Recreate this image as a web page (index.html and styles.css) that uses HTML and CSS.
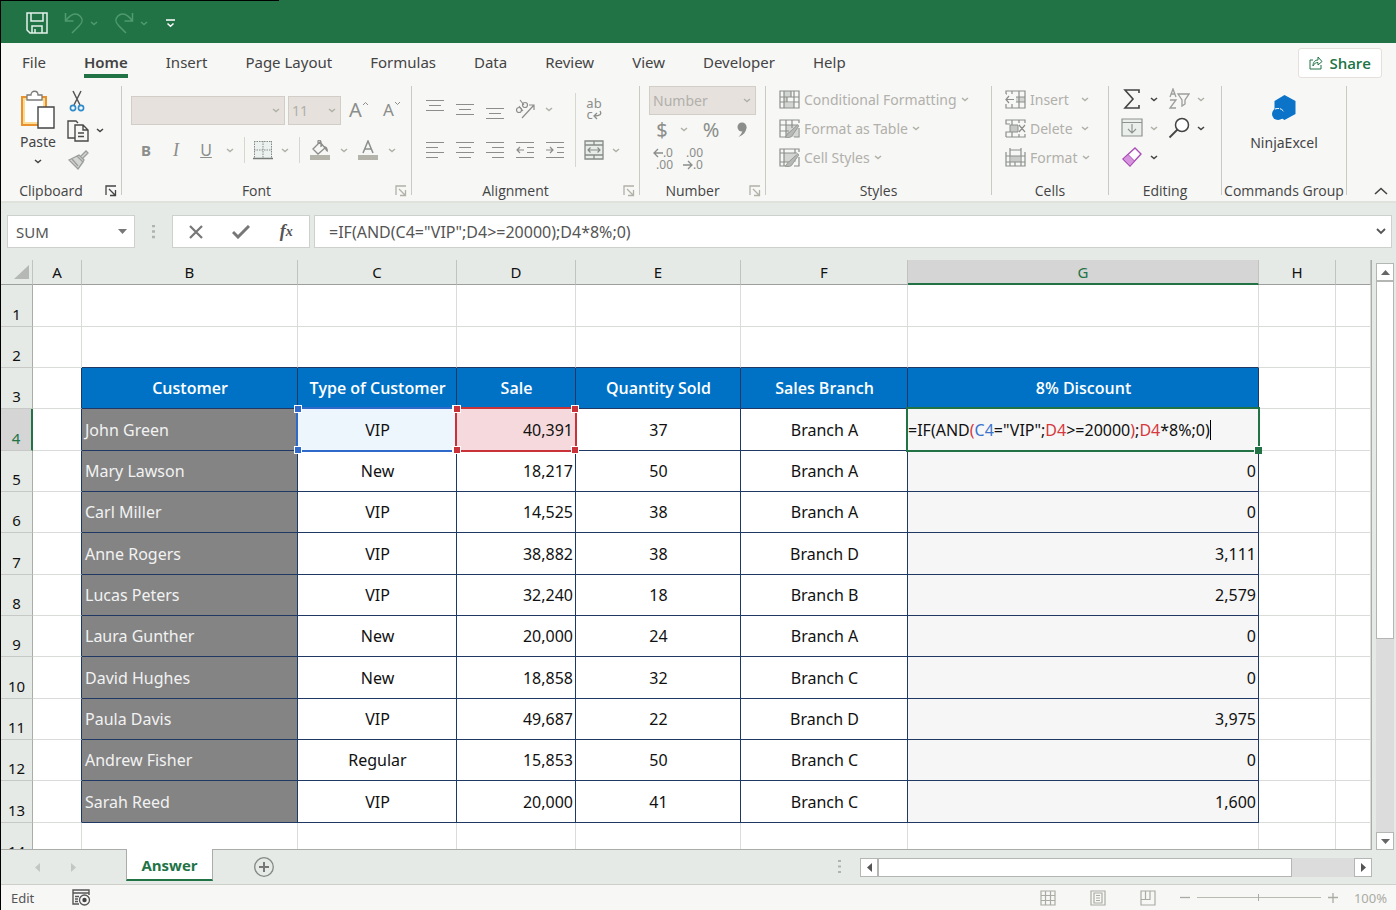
FILE: index.html
```
<!DOCTYPE html>
<html lang="en">
<head>
  <meta charset="UTF-8">
  <meta name="viewport" content="width=device-width, initial-scale=1.0">
  <title>Spreadsheet</title>
  <link rel="stylesheet" href="styles.css">
</head>
<body>
  <svg class="defs" aria-hidden="true">
    <symbol id="chev" viewBox="0 0 8 5"><path d="M1 1l3 2.600L7 1" fill="none" stroke="currentColor" stroke-width="1.500"/></symbol>
    <symbol id="launch" viewBox="0 0 12 12"><path d="M1 10V1h10M4 4l6 6M10.500 5v5.500H5" fill="none" stroke="currentColor" stroke-width="1.300"/></symbol>
    <symbol id="brush" viewBox="0 0 20 20"><path d="M10 17c-3 2-6 1-8 .5 3-1 2-5 5-5.500L18 2l1 2-7 10z" fill="#b5b8b4" stroke="#8b8f8a"/></symbol>
  </svg>

  <div class="app">
    <header class="titlebar">
      <button class="save" aria-label="Save"><svg width="22" height="22" viewBox="0 0 22 22"><path d="M1 1h20v20H4l-3-3zM5 1v8h12V1M6 21v-7h10v7M9 21v-4" fill="none" stroke="#e4f1e9" stroke-width="1.500"/></svg></button>
      <button class="undo" aria-label="Undo"><svg width="20" height="22" viewBox="0 0 20 22"><path d="M1.500 1v8h8M2 8.500C7 2 12 0 16 4s2 7-1 10l-7 7" fill="none" stroke="currentColor" stroke-width="1.500"/></svg><svg class="chev"><use href="#chev"/></svg></button>
      <button class="undo" aria-label="Redo"><svg width="20" height="22" viewBox="0 0 20 22"><path d="M18.500 1v8h-8M18 8.500C13 2 8 0 4 4s-2 7 1 10l7 7" fill="none" stroke="currentColor" stroke-width="1.500"/></svg><svg class="chev"><use href="#chev"/></svg></button>
      <button class="more" aria-label="Customize toolbar"><svg width="9" height="9" viewBox="0 0 9 9"><path d="M0 1h9M1.500 4.500l3 2.800 3-2.800" fill="none" stroke="#fff" stroke-width="1.500"/></svg></button>
    </header>

    <nav class="tabs">
      <a href="#">File</a>
      <a href="#" class="active">Home</a>
      <a href="#">Insert</a>
      <a href="#">Page Layout</a>
      <a href="#">Formulas</a>
      <a href="#">Data</a>
      <a href="#">Review</a>
      <a href="#">View</a>
      <a href="#">Developer</a>
      <a href="#">Help</a>
      <button class="share"><svg width="14" height="14" viewBox="0 0 14 14"><path d="M4 4H1v9h11V9M4 10c0-4 2-6 5-6V1l4 4.500L9 9V6.500C7 6.500 5 7.500 4 10z" fill="none" stroke="currentColor"/></svg>Share</button>
    </nav>

    <section class="ribbon">
      <div class="group clipboard">
        <div class="tools">
          <button class="paste"><svg width="36" height="40" viewBox="0 0 36 40"><path d="M2 7h24v28H2z" fill="#fff" stroke="#e8912d" stroke-width="2"/><path d="M4 9h20v24H4z" fill="none" stroke="#fbdc94" stroke-width="2"/><path d="M7 10V5h4c0-5 7-5 7 0h4v5z" fill="#fff" stroke="#7b7b78" stroke-width="1.300"/><path d="M18 17h16v21H18z" fill="#fff" stroke="#444" stroke-width="1.400"/></svg>Paste<svg class="chev"><use href="#chev"/></svg></button>
          <div class="stack">
            <button aria-label="Cut"><svg width="22" height="22" viewBox="0 0 22 22"><path d="M6 1l7 14M14 1L7 15" fill="none" stroke="#555" stroke-width="1.500"/><circle cx="6" cy="18" r="2.600" fill="none" stroke="#2e8ccb" stroke-width="1.600"/><circle cx="14" cy="18" r="2.600" fill="none" stroke="#2e8ccb" stroke-width="1.600"/></svg></button>
            <button aria-label="Copy"><svg width="22" height="22" viewBox="0 0 22 22"><path d="M8 18H1V1h8l2 2M8 5h8l5 5v11H8zM16 5v5h5M11 13h6M11 16.500h6" fill="none" stroke="#4a4a48" stroke-width="1.400"/></svg><svg class="chev"><use href="#chev"/></svg></button>
            <button aria-label="Format Painter"><svg width="22" height="22" viewBox="0 0 22 22"><path d="M2 11l8-4 6 6-5 7zM5 10l6 7M10 7l2-1 5 5-1 2M14 7l5-5 2 2-5 5" fill="#d4d5d2" stroke="#9b9e9a" stroke-width="1.300"/></svg></button>
          </div>
        </div>
        <footer><span>Clipboard</span><button aria-label="Clipboard settings"><svg class="launch"><use href="#launch"/></svg></button></footer>
      </div>

      <div class="group font off">
        <div class="tools rows">
          <div class="row top">
            <span class="pick name"><select aria-label="Font"><option></option></select><svg class="chev"><use href="#chev"/></svg></span>
            <span class="pick size"><select aria-label="Font size"><option>11</option></select><svg class="chev"><use href="#chev"/></svg></span>
            <button class="ib big" aria-label="Increase font size">A<svg width="7" height="16" viewBox="0 0 7 16"><path d="M1 4l2.500-2.500L6 4" fill="none" stroke="currentColor"/></svg></button>
            <button class="ib mid" aria-label="Decrease font size">A<svg width="7" height="16" viewBox="0 0 7 16"><path d="M1 1l2.500 2.500L6 1" fill="none" stroke="currentColor"/></svg></button>
          </div>
          <div class="row">
            <button class="ib bold">B</button>
            <button class="ib ital">I</button>
            <button class="ib under">U</button>
            <button class="dd" aria-label="Underline styles"><svg class="chev"><use href="#chev"/></svg></button>
            <i class="sep"></i>
            <button class="ib narrow" aria-label="Borders"><svg width="20" height="20" viewBox="0 0 20 20"><path d="M1 1h18v17H1z" fill="#eaf1ee"/><path d="M1.500 1v17M10 1v17M18.500 1v17M1 1.500h18M1 10h18" stroke="#858a86" stroke-dasharray="1.500 1" fill="none"/><path d="M0 18.500h20" stroke="#777b77" stroke-width="1.500"/></svg></button>
            <button class="dd" aria-label="Border styles"><svg class="chev"><use href="#chev"/></svg></button>
            <i class="sep"></i>
            <button class="ib" aria-label="Fill color"><svg width="20" height="20" viewBox="0 0 20 20"><path d="M3 9l7-7 5 6-7 6zM8 4V1q2-2 3 1v5" fill="none" stroke="#8b8e8a" stroke-width="1.300"/><path d="M14 6q4 0 4 6-2 0-3-3z" fill="#8b8e8a"/><path d="M0 15h20v5H0z" fill="#b5b4ab"/></svg></button>
            <button class="dd" aria-label="Fill colors"><svg class="chev"><use href="#chev"/></svg></button>
            <button class="ib" aria-label="Font color"><svg width="20" height="20" viewBox="0 0 20 20"><path d="M5 13l5-12 5 12M7 9h6" fill="none" stroke="#8b8e8a" stroke-width="1.500"/><path d="M0 15h20v5H0z" fill="#b5b4ab"/></svg></button>
            <button class="dd" aria-label="Font colors"><svg class="chev"><use href="#chev"/></svg></button>
          </div>
        </div>
        <footer><span>Font</span><button aria-label="Font settings"><svg class="launch"><use href="#launch"/></svg></button></footer>
      </div>

      <div class="group align off">
        <div class="tools">
          <div class="rows">
            <div class="row top">
              <button class="ib" aria-label="Top align"><svg width="18" height="22" viewBox="0 0 18 22"><path d="M0 2.500h18M3 7.500h12M0 12.500h18" stroke="currentColor" stroke-width="1.200"/></svg></button>
              <button class="ib" aria-label="Middle align"><svg width="18" height="22" viewBox="0 0 18 22"><path d="M0 6.500h18M3 11.500h12M0 16.500h18" stroke="currentColor" stroke-width="1.200"/></svg></button>
              <button class="ib" aria-label="Bottom align"><svg width="18" height="22" viewBox="0 0 18 22"><path d="M0 10.500h18M3 15.500h12M0 20.500h18" stroke="currentColor" stroke-width="1.200"/></svg></button>
              <button class="ib" aria-label="Orientation"><svg width="20" height="20" viewBox="0 0 20 20"><g fill="none" stroke="currentColor" stroke-width="1.200"><path d="M7 19L19 6M19 11V6h-5"/><circle cx="4" cy="11" r="2.500"/><path d="M4 7l4 5"/><circle cx="10" cy="6" r="2.500"/><path d="M5 1l4 5"/></g></svg></button>
              <button class="dd" aria-label="Orientation options"><svg class="chev"><use href="#chev"/></svg></button>
            </div>
            <div class="row">
              <button class="ib" aria-label="Align left"><svg width="18" height="18" viewBox="0 0 18 18"><path d="M0 1.500h18M0 6.500h12M0 11.500h18M0 16.500h12" stroke="currentColor" stroke-width="1.200"/></svg></button>
              <button class="ib" aria-label="Center"><svg width="18" height="18" viewBox="0 0 18 18"><path d="M0 1.500h18M3 6.500h12M0 11.500h18M3 16.500h12" stroke="currentColor" stroke-width="1.200"/></svg></button>
              <button class="ib" aria-label="Align right"><svg width="18" height="18" viewBox="0 0 18 18"><path d="M0 1.500h18M6 6.500h12M0 11.500h18M6 16.500h12" stroke="currentColor" stroke-width="1.200"/></svg></button>
              <button class="ib" aria-label="Decrease indent"><svg width="18" height="18" viewBox="0 0 18 18"><path d="M0 1.500h18M11 6.500h7M11 11.500h7M0 16.500h18M8 9H1M4 6L1 9l3 3" fill="none" stroke="currentColor" stroke-width="1.200"/></svg></button>
              <button class="ib" aria-label="Increase indent"><svg width="18" height="18" viewBox="0 0 18 18"><path d="M0 1.500h18M11 6.500h7M11 11.500h7M0 16.500h18M0 9h7M4 6l3 3-3 3" fill="none" stroke="currentColor" stroke-width="1.200"/></svg></button>
            </div>
          </div>
          <i class="sep tall"></i>
          <div class="rows">
            <div class="row top">
              <button class="ib narrow wrap" aria-label="Wrap text"><span>ab</span><span>c<svg width="9" height="11" viewBox="0 0 9 11"><path d="M7 2q3 5-6 5M4 4L1 7l3 3" fill="none" stroke="currentColor" stroke-width="1.300"/></svg></span></button>
            </div>
            <div class="row">
              <button class="ib narrow" aria-label="Merge cells"><svg width="20" height="20" viewBox="0 0 20 20"><path d="M1 1h18v18H1zM1 5h18M1 15h18M10 1v4M10 15v4" fill="#e8ece9" stroke="#858a86" stroke-width="1.300"/><path d="M4 10h12M6.500 7.500L4 10l2.500 2.500M13.500 7.500L16 10l-2.500 2.500" fill="none" stroke="#858a86" stroke-width="1.200"/></svg></button>
              <button class="dd" aria-label="Merge options"><svg class="chev"><use href="#chev"/></svg></button>
            </div>
          </div>
        </div>
        <footer><span>Alignment</span><button aria-label="Alignment settings"><svg class="launch"><use href="#launch"/></svg></button></footer>
      </div>

      <div class="group number off">
        <div class="tools rows">
          <span class="pick"><select aria-label="Number format"><option>Number</option></select><svg class="chev"><use href="#chev"/></svg></span>
          <div class="row">
            <button class="ib narrow sign">$</button>
            <button class="dd" aria-label="Currency options"><svg class="chev"><use href="#chev"/></svg></button>
            <button class="ib wide sign">%</button>
            <button class="ib narrow" aria-label="Comma style"><svg width="12" height="16" viewBox="0 0 12 16"><circle cx="6" cy="5" r="4.500" fill="currentColor"/><path d="M10.500 5q0 7-8 10 4-4 4-7z" fill="currentColor"/></svg></button>
          </div>
          <div class="row">
            <button class="ib dec" aria-label="Increase decimal"><span><svg width="10" height="12" viewBox="0 0 10 12"><path d="M10 6H1M5 2L1 6l4 4" fill="none" stroke="currentColor" stroke-width="1.300"/></svg>.0</span><span>.00</span></button>
            <button class="ib dec" aria-label="Decrease decimal"><span>.00</span><span><svg width="10" height="12" viewBox="0 0 10 12"><path d="M0 6h9M5 2l4 4-4 4" fill="none" stroke="currentColor" stroke-width="1.300"/></svg>.0</span></button>
          </div>
        </div>
        <footer><span>Number</span><button aria-label="Number settings"><svg class="launch"><use href="#launch"/></svg></button></footer>
      </div>

      <div class="group styles off">
        <div class="tools list">
          <button><svg width="21" height="19" viewBox="0 0 21 19"><path d="M5 1h7v6h-4v5H5zM5 13h10v5H5z" fill="#d3d5d2"/><path d="M1 1h19v17H1zM5 1v17M12 1v6M15 1v17M1 7h19M1 12h19M8 7v5" fill="none" stroke="#8b8f8a" stroke-width="1.200"/></svg>Conditional Formatting<svg class="chev"><use href="#chev"/></svg></button>
          <button><svg width="21" height="19" viewBox="0 0 21 19"><path d="M7 6h12v12H7z" fill="#d3d5d2"/><path d="M20 4V1H1v17h7M7 1v17M13 1v8M1 6h17M1 12h9M20 9v9h-5" fill="none" stroke="#8b8f8a" stroke-width="1.200"/><use href="#brush" x="4" y="4" width="17" height="16"/></svg>Format as Table<svg class="chev"><use href="#chev"/></svg></button>
          <button><svg width="21" height="19" viewBox="0 0 21 19"><path d="M5 5h12v9H5z" fill="#d3d5d2"/><path d="M20 4V1H1v17h8M5 1v17M16 1v4M1 5h17M1 14h8M20 9v9h-5" fill="none" stroke="#8b8f8a" stroke-width="1.200"/><use href="#brush" x="4" y="4" width="17" height="16"/></svg>Cell Styles<svg class="chev"><use href="#chev"/></svg></button>
        </div>
        <footer><span>Styles</span></footer>
      </div>

      <div class="group cells off">
        <div class="tools list">
          <button><svg width="21" height="19" viewBox="0 0 21 19"><path d="M11 7h9v5h-9z" fill="#d3d5d2"/><path d="M1 4V1h19v17H1v-4M7 1v3M14 1v17M7 14v4M1 4h1M11 7h9M11 12h9M9 9.500H1M4 6L1 9.500 4 13" fill="none" stroke="#8b8f8a" stroke-width="1.200"/></svg><span>Insert</span><svg class="chev"><use href="#chev"/></svg></button>
          <button><svg width="21" height="19" viewBox="0 0 21 19"><path d="M5 6h8v7H5z" fill="#c5c8c5" stroke="#8b8f8a"/><path d="M20 4V1H1v4h4M1 18h19v-3M1 18v-5h4M7 1v5M14 1v3M7 13v5M14 15v3M14 6l6 7M20 6l-6 7" fill="none" stroke="#8b8f8a" stroke-width="1.200"/></svg><span>Delete</span><svg class="chev"><use href="#chev"/></svg></button>
          <button><svg width="21" height="19" viewBox="0 0 21 19"><path d="M6 8h9v6H6z" fill="#c9cbc8"/><path d="M1 4v14h19V4M5 4v14M16 4v14M1 8h19M1 14h19M10 14v4M5 2h11M5 0v4M16 0v4" fill="none" stroke="#8b8f8a" stroke-width="1.200"/></svg><span>Format</span><svg class="chev"><use href="#chev"/></svg></button>
        </div>
        <footer><span>Cells</span></footer>
      </div>

      <div class="group editing">
        <div class="tools list">
          <div class="row">
            <button aria-label="AutoSum"><svg width="22" height="20" viewBox="0 0 22 20"><path d="M18 4V1H4l8 9-8 9h14v-3" fill="none" stroke="#444" stroke-width="1.600"/></svg><svg class="chev"><use href="#chev"/></svg></button>
            <button class="dim" aria-label="Sort and filter"><svg width="22" height="22" viewBox="0 0 22 22"><path d="M2 9l3-8 3 8M3 6h4M2 12h6l-6 8h6M10 6h11l-4 6v4l-3 2v-6z" fill="none" stroke="#9b9e9a" stroke-width="1.300"/></svg><svg class="chev"><use href="#chev"/></svg></button>
          </div>
          <div class="row">
            <button class="dim" aria-label="Fill"><svg width="22" height="20" viewBox="0 0 22 20"><path d="M1 1h20v17H1zM1 4.500h20M11 6v9M7 11l4 4 4-4" fill="#eaefec" stroke="#8f938f" stroke-width="1.200"/></svg><svg class="chev"><use href="#chev"/></svg></button>
            <button aria-label="Find"><svg width="22" height="22" viewBox="0 0 22 22"><circle cx="14" cy="8" r="6.500" fill="#fff" stroke="#444" stroke-width="1.500"/><path d="M9.500 12.500l-8 8" stroke="#444" stroke-width="1.800"/></svg><svg class="chev"><use href="#chev"/></svg></button>
          </div>
          <div class="row">
            <button aria-label="Clear"><svg width="22" height="20" viewBox="0 0 22 20"><path d="M2 12L14 1l6 6L9 19z" fill="#fff" stroke="#a84fb5" stroke-width="1.400"/><path d="M2 12l5-4.500L13.500 14 9 19z" fill="#d893df" stroke="#a84fb5"/></svg><svg class="chev"><use href="#chev"/></svg></button>
          </div>
        </div>
        <footer><span>Editing</span></footer>
      </div>

      <div class="group ninja">
        <div class="tools">
          <button class="addin"><svg width="24" height="26" viewBox="0 0 24 26"><path d="M12.500 0l11 6v13l-11 6-10-6V6z" fill="#0b74c9"/><circle cx="6" cy="19" r="6" fill="#0b74c9"/><path d="M3 14q6-2 9 3" fill="none" stroke="#fff" stroke-dasharray="4 1"/></svg>NinjaExcel</button>
        </div>
        <footer><span>Commands Group</span></footer>
      </div>
      <button class="collapse" aria-label="Collapse ribbon"><svg width="14" height="8" viewBox="0 0 14 8"><path d="M1 7l6-5.500L13 7" fill="none" stroke="#444" stroke-width="1.600"/></svg></button>
    </section>

    <section class="formulabar">
      <div class="namebox"><input type="text" value="SUM" aria-label="Name box"><button aria-label="Names"><svg width="9" height="5" viewBox="0 0 9 5"><path d="M0 0h9L4.500 5z" fill="#777"/></svg></button></div>
      <svg class="dots" width="3" height="14" viewBox="0 0 3 14"><path d="M0 1h3M0 6.500h3M0 12h3" stroke="#b0b4b0" stroke-width="2.500"/></svg>
      <div class="fx">
        <button aria-label="Cancel"><svg width="16" height="14" viewBox="0 0 16 14"><path d="M2 1l12 12M14 1L2 13" stroke="#777" stroke-width="2.200"/></svg></button>
        <button aria-label="Enter"><svg width="18" height="14" viewBox="0 0 18 14"><path d="M1 7l5 5L17 1" fill="none" stroke="#777" stroke-width="3"/></svg></button>
        <button class="fxbtn">f<sub>x</sub></button>
      </div>
      <div class="formula"><input type="text" value='=IF(AND(C4="VIP";D4&gt;=20000);D4*8%;0)' aria-label="Formula"><button aria-label="Expand"><svg width="10" height="7" viewBox="0 0 10 7"><path d="M1 1l4 4 4-4" fill="none" stroke="#555" stroke-width="1.800"/></svg></button></div>
    </section>

    <main class="workspace">
      <div class="sheet">
        <table>
          <colgroup><col class="w-num"><col class="w-a"><col class="w-b"><col class="w-c"><col class="w-d"><col class="w-e"><col class="w-f"><col class="w-g"><col class="w-h"><col></colgroup>
          <thead>
            <tr><th class="corner"><svg width="15" height="14" viewBox="0 0 15 14"><path d="M15 0v14H0z" fill="#b5b8b4"/></svg></th><th>A</th><th>B</th><th>C</th><th>D</th><th>E</th><th>F</th><th class="on">G</th><th>H</th><th></th></tr>
          </thead>
          <tbody>
            <tr><th>1</th><td></td><td></td><td></td><td></td><td></td><td></td><td></td><td></td><td></td></tr>
            <tr class="above"><th>2</th><td></td><td></td><td></td><td></td><td></td><td></td><td></td><td></td><td></td></tr>
            <tr class="data head"><th>3</th><td></td><td>Customer</td><td>Type of Customer</td><td>Sale</td><td>Quantity Sold</td><td>Sales Branch</td><td>8% Discount</td><td></td><td></td></tr>
            <tr class="data"><th class="on">4</th><td></td><td>John Green</td><td class="ref blue">VIP<span class="frame"><i></i><i></i><i></i><i></i></span></td><td class="ref red">40,391<span class="frame"><i></i><i></i><i></i><i></i></span></td><td>37</td><td>Branch A</td><td class="edit">=IF(AND<span class="r">(</span><span class="b">C4</span>="VIP";<span class="r">D4</span>&gt;=20000<span class="r">)</span>;<span class="r">D4</span>*8%;0)<span class="caret"></span><span class="cursor"></span></td><td></td><td></td></tr>
            <tr class="data"><th>5</th><td></td><td>Mary Lawson</td><td>New</td><td>18,217</td><td>50</td><td>Branch A</td><td>0</td><td></td><td></td></tr>
            <tr class="data"><th>6</th><td></td><td>Carl Miller</td><td>VIP</td><td>14,525</td><td>38</td><td>Branch A</td><td>0</td><td></td><td></td></tr>
            <tr class="data"><th>7</th><td></td><td>Anne Rogers</td><td>VIP</td><td>38,882</td><td>38</td><td>Branch D</td><td>3,111</td><td></td><td></td></tr>
            <tr class="data"><th>8</th><td></td><td>Lucas Peters</td><td>VIP</td><td>32,240</td><td>18</td><td>Branch B</td><td>2,579</td><td></td><td></td></tr>
            <tr class="data"><th>9</th><td></td><td>Laura Gunther</td><td>New</td><td>20,000</td><td>24</td><td>Branch A</td><td>0</td><td></td><td></td></tr>
            <tr class="data"><th>10</th><td></td><td>David Hughes</td><td>New</td><td>18,858</td><td>32</td><td>Branch C</td><td>0</td><td></td><td></td></tr>
            <tr class="data"><th>11</th><td></td><td>Paula Davis</td><td>VIP</td><td>49,687</td><td>22</td><td>Branch D</td><td>3,975</td><td></td><td></td></tr>
            <tr class="data"><th>12</th><td></td><td>Andrew Fisher</td><td>Regular</td><td>15,853</td><td>50</td><td>Branch C</td><td>0</td><td></td><td></td></tr>
            <tr class="data"><th>13</th><td></td><td>Sarah Reed</td><td>VIP</td><td>20,000</td><td>41</td><td>Branch C</td><td>1,600</td><td></td><td></td></tr>
            <tr><th>14</th><td></td><td></td><td></td><td></td><td></td><td></td><td></td><td></td><td></td></tr>
          </tbody>
        </table>
      </div>
      <div class="vscroll">
        <button aria-label="Scroll up"><svg width="9" height="5" viewBox="0 0 9 5"><path d="M0 5h9L4.500 0z" fill="#666"/></svg></button>
        <div class="track"><div class="thumb"></div></div>
        <button aria-label="Scroll down"><svg width="9" height="5" viewBox="0 0 9 5"><path d="M0 0h9L4.500 5z" fill="#666"/></svg></button>
      </div>
    </main>

    <section class="sheettabs">
      <div class="arrows">
        <button aria-label="Previous sheet"><svg width="5" height="9" viewBox="0 0 5 9"><path d="M5 0v9L0 4.500z" fill="#c3c7c3"/></svg></button>
        <button aria-label="Next sheet"><svg width="5" height="9" viewBox="0 0 5 9"><path d="M0 0v9l5-4.500z" fill="#c3c7c3"/></svg></button>
      </div>
      <button class="tab">Answer</button>
      <button class="add" aria-label="New sheet"><svg width="20" height="20" viewBox="0 0 20 20"><circle cx="10" cy="10" r="9.300" fill="none" stroke="#858885" stroke-width="1.300"/><path d="M10 5v10M5 10h10" stroke="#777" stroke-width="2"/></svg></button>
      <svg class="dots" width="3" height="14" viewBox="0 0 3 14"><path d="M0 1h3M0 6.500h3M0 12h3" stroke="#b0b4b0" stroke-width="2"/></svg>
      <div class="hscroll">
        <button aria-label="Scroll left"><svg width="5" height="9" viewBox="0 0 5 9"><path d="M5 0v9L0 4.500z" fill="#555"/></svg></button>
        <div class="track"><div class="thumb"></div></div>
        <button aria-label="Scroll right"><svg width="5" height="9" viewBox="0 0 5 9"><path d="M0 0v9l5-4.500z" fill="#555"/></svg></button>
      </div>
    </section>

    <footer class="status">
      <span>Edit</span>
      <button aria-label="Record macro"><svg width="19" height="17" viewBox="0 0 19 17"><path d="M17 6V1H1v14h6M1 4h16M3 7.500h4M3 10h3M3 12.500h3" fill="none" stroke="#555" stroke-width="1.400"/><circle cx="12.500" cy="11" r="5" fill="#f7f7f6" stroke="#555" stroke-width="1.300"/><circle cx="12.500" cy="11" r="2.200" fill="#444"/></svg></button>
      <div class="views">
        <button aria-label="Normal view"><svg width="16" height="16" viewBox="0 0 16 16"><path d="M1 1h14v14H1zM5.500 1v14M10.500 1v14M1 5.500h14M1 10.500h14" fill="none" stroke="currentColor" stroke-width="1.200"/></svg></button>
        <button aria-label="Page layout view"><svg width="16" height="16" viewBox="0 0 16 16"><path d="M1 1h14v14H1zM4 3h8v10H4zM6 5.500h4M6 8h4M6 10.500h4" fill="none" stroke="currentColor" stroke-width="1.200"/></svg></button>
        <button aria-label="Page break view"><svg width="16" height="16" viewBox="0 0 16 16"><path d="M1 1h14v14H1zM1 9.500h9V1M5.500 1v8.500" fill="none" stroke="currentColor" stroke-width="1.200"/></svg></button>
      </div>
      <div class="zoom">
        <button aria-label="Zoom out"><svg width="10" height="10" viewBox="0 0 10 10"><path d="M0 4.500h10" stroke="currentColor" stroke-width="1.300"/></svg></button>
        <input type="range" min="0" max="100" value="50" aria-label="Zoom">
        <button aria-label="Zoom in"><svg width="10" height="10" viewBox="0 0 10 10"><path d="M0 4.500h10M5 0v10" stroke="currentColor" stroke-width="1.300"/></svg></button>
        <span>100%</span>
      </div>
    </footer>
  </div>
</body>
</html>
```
FILE: styles.css
```
* {
  margin: 0;
  padding: 0;
  box-sizing: border-box;
}

body {
  font-family: 'Noto Sans', 'Open Sans', sans-serif;
  font-size: 14px;
  color: #444;
  background: #e6eae6;
}

button, input, select {
  font: inherit;
  color: inherit;
  background: none;
  border: none;
  border-radius: 0;
  outline: none;
}

button {
  display: flex;
  align-items: center;
  justify-content: center;
}

svg {
  display: block;
  flex: none;
}

.defs {
  position: absolute;
  width: 0;
  height: 0;
}

.app {
  display: flex;
  flex-direction: column;
  height: 100vh;
  border-left: 1px solid #000;
}

.chev {
  width: 8px;
  height: 5px;
}

.launch {
  width: 12px;
  height: 12px;
}

/* title bar */
.titlebar {
  position: relative;
  display: flex;
  align-items: center;
  height: 43px;
  padding: 3px 25px 0;
  background: #217346;
}

.titlebar::before {
  content: "";
  position: absolute;
  top: 0;
  left: 0;
  width: 278px;
  height: 1px;
  background: #000;
}

.undo {
  gap: 6px;
  margin-left: 16px;
  color: #4f9a6f;
}

.more {
  margin-left: 18px;
}

/* tabs */
.tabs {
  display: flex;
  align-items: center;
  gap: 38px;
  height: 39px;
  padding: 0 14px 0 21px;
  background: #f7f7f6;
  font-size: 15px;
}

.tabs a {
  color: #444;
  text-decoration: none;
  line-height: 24px;
  padding-top: 3px;
  border-bottom: 4px solid transparent;
}

.tabs .active {
  font-weight: 600;
  border-color: #217346;
}

.share {
  gap: 6px;
  height: 30px;
  margin-left: auto;
  padding: 0 10px;
  color: #217346;
  font-family: 'Open Sans', sans-serif;
  font-weight: 600;
  background: #fff;
  border: 1px solid #e6dfdb;
  border-radius: 3px;
}

/* ribbon */
.ribbon {
  display: flex;
  height: 121px;
  padding: 4px 0 6px;
  background: #f7f7f6;
  border-bottom: 2px solid #dfe3dc;
}

.group {
  display: flex;
  flex-direction: column;
  justify-content: space-between;
  border-right: 1px solid #c9cac3;
}

.off, .dim {
  color: #8b8e8a;
}

.off .chev, .dim .chev, .off .launch {
  color: #b1b1a8;
}

.tools {
  display: flex;
  height: 88px;
}

.group footer {
  display: flex;
  height: 12px;
  line-height: 16px;
  color: #444;
  font-family: 'Open Sans', sans-serif;
}

.group footer span {
  flex: 1;
  text-align: center;
  white-space: nowrap;
}

.group footer button {
  width: 20px;
  height: 16px;
}

.rows {
  flex-direction: column;
}

.row {
  display: flex;
  align-items: center;
}

.ib {
  width: 30px;
  height: 26px;
}

.ib.narrow {
  width: 26px;
}

.ib.wide {
  width: 36px;
}

.dd {
  width: 18px;
  height: 26px;
}

.sep {
  width: 1px;
  height: 26px;
  margin: 0 5px;
  background: #d6d7cf;
}

.sep.tall {
  height: 74px;
  margin-top: 7px;
}

.pick {
  display: flex;
  align-items: center;
  height: 29px;
  padding-right: 4px;
  background: #e6e1dd;
  border: 1px solid #d3cdc8;
}

.pick select {
  flex: 1;
  min-width: 0;
  height: 27px;
  padding-left: 3px;
  appearance: none;
  color: #b1b0aa;
}

.clipboard {
  width: 121px;
}

.paste {
  flex-direction: column;
  justify-content: flex-start;
  width: 46px;
  margin-left: 14px;
  padding-top: 4px;
  line-height: 24px;
}

.paste .chev {
  margin-top: 5px;
}

.stack {
  display: flex;
  flex-direction: column;
  align-items: flex-start;
  justify-content: space-between;
  padding: 4px 0 3px 6px;
}

.stack button {
  gap: 7px;
}

.top {
  align-items: flex-start;
  height: 51px;
  padding-top: 10px;
}

.font {
  width: 290px;
}

.font .tools {
  padding-left: 9px;
}

.font .top {
  gap: 3px;
}

.font .name {
  width: 154px;
}

.font .size {
  width: 53px;
}

.big {
  font-size: 20px;
}

.mid {
  font-size: 17px;
}

.bold {
  font-weight: 700;
  font-size: 15px;
}

.ital {
  font-family: 'Liberation Serif', serif;
  font-style: italic;
  font-size: 18px;
}

.under {
  text-decoration: underline;
  font-size: 16px;
}

.align {
  width: 228px;
}

.align .tools {
  padding-left: 8px;
}

.wrap {
  flex-direction: column;
  font-size: 13px;
  line-height: 11px;
}

.wrap span, .dec span {
  display: flex;
}

.number {
  width: 126px;
}

.number .tools {
  padding: 0 9px;
}

.number .row {
  height: 29px;
}

.sign {
  font-size: 20px;
}

.dec {
  flex-direction: column;
  align-items: flex-end;
  padding-right: 6px;
  font-size: 12px;
  line-height: 12px;
}

.list {
  flex-direction: column;
  gap: 3px;
}

.list button {
  height: 26px;
  gap: 4px;
  align-self: flex-start;
  color: #b1b0aa;
  white-space: nowrap;
}

.styles {
  width: 226px;
}

.cells {
  width: 117px;
}

.styles .tools, .cells .tools {
  padding-left: 13px;
}

.cells .list span {
  min-width: 47px;
  text-align: left;
}

.editing {
  width: 113px;
}

.editing .tools {
  padding-left: 12px;
}

.editing .list .chev {
  margin: 0 10px 0 3px;
}

.editing .list button:not(.dim) .chev,
.clipboard .chev,
.clipboard .launch {
  color: #444;
}

.ninja {
  width: 125px;
}

.addin {
  flex-direction: column;
  justify-content: flex-start;
  width: 100%;
  padding-top: 9px;
  gap: 12px;
}

.collapse {
  align-self: flex-end;
  margin-left: auto;
  padding: 0 8px 0 0;
}

/* formula bar */
.formulabar {
  display: flex;
  align-items: center;
  height: 57px;
  padding: 0 4px 0 6px;
  color: #555;
  font-size: 15px;
}

.namebox, .fx, .formula {
  display: flex;
  align-items: center;
  height: 33px;
  background: #fff;
  border: 1px solid #cdd0cc;
}

.namebox {
  width: 128px;
}

.namebox input {
  flex: 1;
  min-width: 0;
  padding-left: 8px;
}

.namebox button {
  width: 24px;
}

.formulabar .dots {
  margin: 0 17px;
}

.fx {
  width: 138px;
}

.fx button {
  flex: 1;
}

.fxbtn {
  font-family: 'Liberation Serif', serif;
  font-style: italic;
  font-weight: 700;
  font-size: 18px;
}

.fxbtn sub {
  font-size: 14px;
}

.formula {
  flex: 1;
  margin-left: 4px;
}

.formula input {
  flex: 1;
  padding-left: 14px;
  font-size: 16px;
}

.formula button {
  width: 20px;
}

/* grid */
.workspace {
  display: flex;
  flex: 1;
  min-height: 0;
}

.sheet {
  flex: 1;
  overflow: hidden;
  border-right: 1px solid #a9aca9;
  border-bottom: 1px solid #a9aca9;
}

table {
  width: 100%;
  table-layout: fixed;
  border-spacing: 0;
  font-size: 16px;
  line-height: 20px;
  color: #111;
}

.w-num { width: 32px; }
.w-a { width: 49px; }
.w-b { width: 216px; }
.w-c { width: 159px; }
.w-d { width: 119px; }
.w-e { width: 165px; }
.w-f { width: 167px; }
.w-g { width: 351px; }
.w-h { width: 77px; }

th {
  font-weight: 400;
  background: #e6eae6;
}

thead th {
  height: 25px;
  font-size: 15px;
  border-right: 1px solid #c0c3c0;
  border-bottom: 1px solid #9c9f9c;
}

thead .on {
  color: #217346;
  background: #d5d5d5;
  border-bottom: 2px solid #217346;
}

.corner svg {
  margin-left: 13px;
}

tbody tr {
  height: 41px;
}

tbody tr:nth-child(3n+1) {
  height: 42px;
}

tbody th {
  padding-bottom: 2px;
  font-size: 15px;
  vertical-align: bottom;
  border-right: 1px solid #a9aca9;
  border-bottom: 1px solid #c6c9c6;
}

tbody .on {
  color: #217346;
  background: #d5d5d5;
  border-right: 2px solid #217346;
}

td {
  padding: 0 2px 0 3px;
  text-align: center;
  background: #fff;
  border-right: 1px solid #dadcda;
  border-bottom: 1px solid #dadcda;
}

.above td:nth-child(n+3):nth-child(-n+8),
.data td:nth-child(n+3):nth-child(-n+8) {
  border-bottom-color: #1f3864;
}

.data td:nth-child(n+2):nth-child(-n+8) {
  border-right-color: #1f3864;
}

.data td:nth-child(3) {
  color: #f2f2f2;
  text-align: left;
  background: #848484;
}

.data td:nth-child(5),
.data td:nth-child(8) {
  text-align: right;
}

.data td:nth-child(8) {
  background: #f6f6f6;
}

.head td:nth-child(n+3):nth-child(-n+8) {
  color: #fff;
  font-family: 'Open Sans', sans-serif;
  font-weight: 600;
  text-align: center;
  background: #0072c6;
}

.ref, .edit {
  position: relative;
}

.data .blue {
  background: #eef6fd;
}

.data .red {
  background: #f6d9dc;
}

.frame {
  position: absolute;
  inset: -2px;
  border: 2px solid #2f69c9;
}

.red .frame {
  border-color: #c93238;
}

.frame i {
  position: absolute;
  width: 8px;
  height: 8px;
  background: #2f69c9;
  border: 1px solid #fff;
}

.red i {
  background: #c93238;
}

.frame i:nth-child(1) { top: -4px; left: -4px; }
.frame i:nth-child(2) { top: -4px; right: -4px; }
.frame i:nth-child(3) { bottom: -4px; left: -4px; }
.frame i:nth-child(4) { bottom: -4px; right: -4px; }

.data td.edit:nth-child(8) {
  padding: 0;
  text-align: left;
  white-space: nowrap;
}

.edit .r { color: #d6383d; }
.edit .b { color: #3b73cc; }

.caret {
  display: inline-block;
  height: 20px;
  border-left: 1px solid #000;
  vertical-align: bottom;
}

.cursor {
  position: absolute;
  inset: -2px;
  border: 2px solid #217346;
}

.cursor::after {
  content: "";
  position: absolute;
  right: -4px;
  bottom: -4px;
  width: 7px;
  height: 7px;
  background: #217346;
  border: solid #fff;
  border-width: 1px 0 0 1px;
}

/* scroll bars */
.vscroll {
  display: flex;
  flex-direction: column;
  width: 18px;
  margin: 3px 2px 0 4px;
}

.vscroll button, .hscroll button, .thumb {
  background: #fff;
  border: 1px solid #b4b6b4;
}

.vscroll button {
  height: 18px;
}

.track {
  flex: 1;
  background: #dcdcdc;
}

.vscroll .thumb {
  height: 65%;
}

.sheettabs {
  display: flex;
  align-items: center;
  height: 34px;
  padding-right: 24px;
}

.arrows {
  display: flex;
  justify-content: center;
  gap: 31px;
  width: 125px;
  padding-right: 17px;
}

.tab {
  align-self: flex-start;
  width: 87px;
  height: 32px;
  margin-top: -1px;
  padding-top: 2px;
  color: #217346;
  font-family: 'Open Sans', sans-serif;
  font-size: 15px;
  font-weight: 700;
  background: #fff;
  border: 1px solid #a9aca9;
  border-top: none;
  border-bottom: 2px solid #217346;
}

.add {
  margin: 0 auto 0 41px;
}

.sheettabs .dots {
  margin-right: 19px;
}

.hscroll {
  display: flex;
  width: 512px;
  height: 19px;
}

.hscroll button {
  width: 18px;
}

.hscroll .track {
  display: flex;
}

.hscroll .thumb {
  width: 87%;
}

/* status bar */
.status {
  display: flex;
  align-items: center;
  height: 26px;
  padding: 0 9px 0 10px;
  color: #555;
  background: #f7f7f6;
  border-top: 1px solid #cdd0c8;
  font-size: 13px;
}

.status > button {
  margin-left: 38px;
}

.views {
  display: flex;
  gap: 34px;
  margin-left: auto;
  color: #aaaca3;
}

.zoom {
  display: flex;
  align-items: center;
  gap: 7px;
  margin-left: 24px;
  color: #aaaca3;
}

.zoom span {
  margin-left: 9px;
}

.zoom input {
  width: 124px;
  height: 12px;
  appearance: none;
}

.zoom input::-webkit-slider-runnable-track {
  height: 1px;
  background: #b9bbb2;
}

.zoom input::-webkit-slider-thumb {
  width: 1px;
  height: 7px;
  margin-top: -3px;
  appearance: none;
  background: #aaaca3;
}
```
